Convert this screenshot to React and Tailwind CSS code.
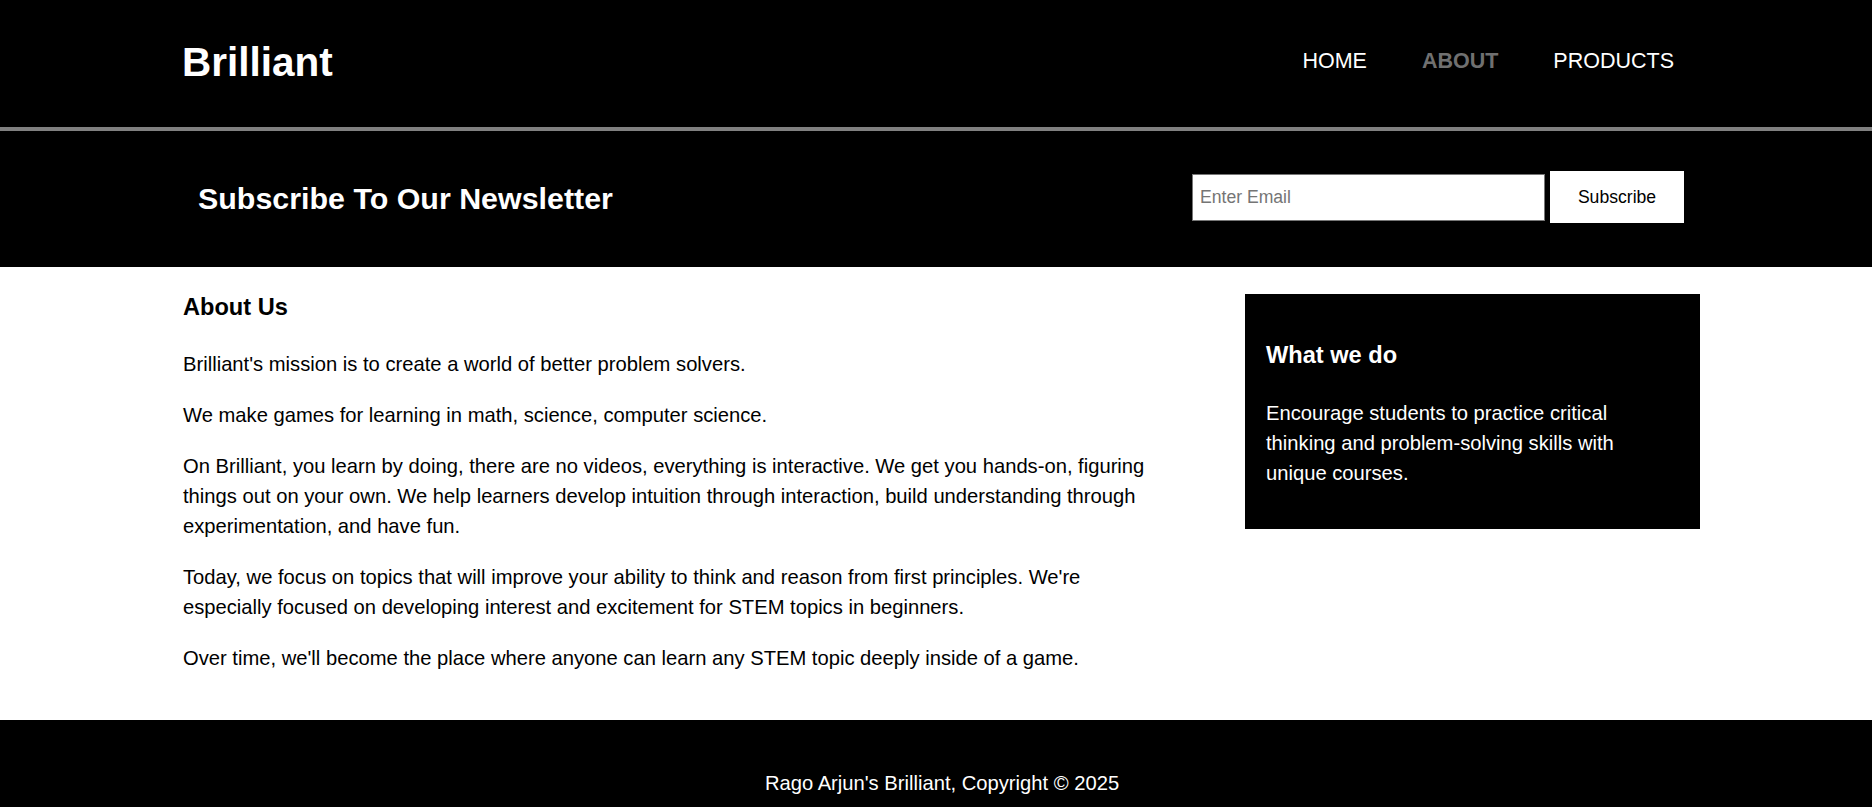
import React from "react";

const navLinks = [
  { label: "HOME", active: false },
  { label: "ABOUT", active: true },
  { label: "PRODUCTS", active: false },
];

const paragraphs = [
  "Brilliant's mission is to create a world of better problem solvers.",
  "We make games for learning in math, science, computer science.",
  "On Brilliant, you learn by doing, there are no videos, everything is interactive. We get you hands-on, figuring things out on your own. We help learners develop intuition through interaction, build understanding through experimentation, and have fun.",
  "Today, we focus on topics that will improve your ability to think and reason from first principles. We're especially focused on developing interest and excitement for STEM topics in beginners.",
  "Over time, we'll become the place where anyone can learn any STEM topic deeply inside of a game.",
];

export default function App() {
  return (
    <div className="min-h-screen bg-white text-black font-['Liberation_Sans',Arial,sans-serif]">
      {/* header */}
      <header className="bg-black border-b-4 border-[#808080] h-[131px] flex items-start justify-between pl-[182px] pr-[198px]">
        <h1 className="mt-[42px] text-[40.5px] leading-[40px] font-bold text-white">Brilliant</h1>
        <nav className="mt-[51px] flex gap-[55px] text-[21.5px] leading-[21px]">
          {navLinks.map((l) => (
            <a
              key={l.label}
              href="#"
              className={l.active ? "text-[#707070] font-bold" : "text-white"}
            >
              {l.label}
            </a>
          ))}
        </nav>
      </header>

      {/* newsletter */}
      <section className="bg-black h-[136px] flex items-center justify-between pl-[198px] pr-[188px] pb-[4px]">
        <h2 className="mt-[2px] text-[30.4px] leading-[30px] font-bold text-white">Subscribe To Our Newsletter</h2>
        <form className="flex items-center gap-[5px]" onSubmit={(e) => e.preventDefault()}>
          <input
            type="email"
            placeholder="Enter Email"
            className="w-[353px] h-[47px] bg-white border border-[#767676] px-[7px] text-[17.6px] text-black placeholder:text-[#757575] outline-none"
          />
          <button type="submit" className="w-[134px] h-[52px] bg-white text-black text-[17.6px]">
            Subscribe
          </button>
        </form>
      </section>

      {/* main */}
      <main className="flex items-start pl-[183px] pt-[23px] pb-[47px]">
        <div className="w-[980px]">
          <h3 className="text-[23.6px] leading-[35px] font-bold">About Us</h3>
          <div className="mt-[24px] flex flex-col gap-[21px] text-[20.2px] leading-[30px]">
            {paragraphs.map((p, i) => (
              <p key={i}>{p}</p>
            ))}
          </div>
        </div>
        <aside className="ml-[82px] mt-[4px] w-[455px] bg-black text-white px-[21px] pt-[44px] pb-[41px]">
          <h3 className="text-[23.6px] leading-[35px] font-bold">What we do</h3>
          <p className="mt-[25px] max-w-[390px] text-[20.2px] leading-[30px]">
            Encourage students to practice critical thinking and problem-solving skills with unique courses.
          </p>
        </aside>
      </main>

      {/* footer */}
      <footer className="bg-black text-white text-center text-[20.2px] leading-[30px] pt-[48px] pb-[48px] pl-[12px]">
        Rago Arjun's Brilliant, Copyright © 2025
      </footer>
    </div>
  );
}
